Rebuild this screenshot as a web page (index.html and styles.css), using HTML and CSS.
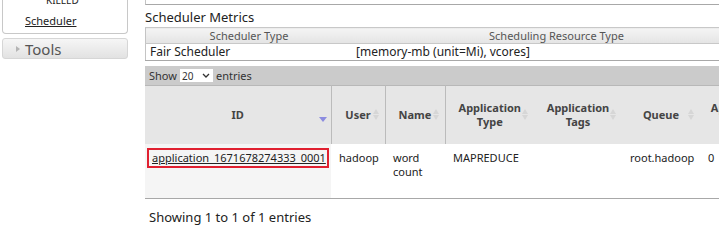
FILE: index.html
```html
<!DOCTYPE html>
<html lang="en">
<head>
    <meta charset="UTF-8">
    <title>All Applications</title>
    <link rel="stylesheet" href="styles.css">
</head>
<body>

    <div class="page">
        <nav class="nav">
            <div class="nav-panel">
                <ul class="nav-list">
                    <li class="state"><a href="#">KILLED</a></li>
                    <li><a href="#">Scheduler</a></li>
                </ul>
            </div>
            <h3 class="nav-head"><span class="nav-arrow"></span>Tools</h3>
        </nav>

        <main class="content">
            <!-- tail of the cluster metrics table, scrolled off the top -->
            <div class="prev-table">
                <span>g</span><span>g</span><span>g</span><span>g</span>
            </div>

            <h3 class="section-title">Scheduler Metrics</h3>
            <table class="metrics">
                <thead>
                    <tr>
                        <th class="col-type">Scheduler Type</th>
                        <th class="col-res">Scheduling Resource Type</th>
                    </tr>
                </thead>
                <tbody>
                    <tr>
                        <td>Fair Scheduler</td>
                        <td>[memory-mb (unit=Mi), vcores]</td>
                    </tr>
                </tbody>
            </table>

            <div class="apps">
                <div class="apps-length">
                    Show
                    <span class="length-select">20
                        <svg width="8" height="5" viewBox="0 0 8 5"><path d="M1 1 L4 4 L7 1" fill="none" stroke="#333" stroke-width="1.3"/></svg>
                    </span>
                    entries
                </div>

                <table class="apps-table">
                    <thead>
                        <tr>
                            <th class="c-id sep">ID<span class="sort sort-desc"></span></th>
                            <th class="c-user sep">User<span class="sort"></span></th>
                            <th class="c-name sep">Name<span class="sort"></span></th>
                            <th class="c-type">Application Type<span class="sort"></span></th>
                            <th class="c-tags">Application Tags<span class="sort"></span></th>
                            <th class="c-queue">Queue<span class="sort"></span></th>
                            <th class="c-prio">Application Priority<span class="sort"></span></th>
                        </tr>
                    </thead>
                    <tbody>
                        <tr>
                            <td class="sorted"><a class="app-link" href="#">application_1671678274333_0001</a></td>
                            <td>hadoop</td>
                            <td>word count</td>
                            <td>MAPREDUCE</td>
                            <td></td>
                            <td>root.hadoop</td>
                            <td>0</td>
                        </tr>
                    </tbody>
                </table>

                <div class="apps-info">Showing 1 to 1 of 1 entries</div>
            </div>
        </main>
    </div>

</body>
</html>
```

FILE: styles.css
```css
/* base */
body {
    margin: 0;
    font-family: 'Noto Sans', 'Open Sans', sans-serif;
    font-size: 13px;
    color: #222;
    background: #fff;
    overflow: hidden;
}

a {
    color: #222;
}

.page {
    display: flex;
    align-items: flex-start;
}

/* --- left navigation (accordion) --- */
.nav {
    width: 126px;
    margin-left: 2px;
    flex-shrink: 0;
}

.nav-panel {
    border: 1px solid #c8c8c8;
    border-top: none;
    border-radius: 0 0 4px 4px;
    margin-top: -6px;
    padding-bottom: 2px;
}

.nav-list {
    list-style: none;
    margin: 0;
    padding: 0;
}

.nav-list li {
    margin-top: 5px;
    padding-left: 22px;
    font-size: 11px;
    line-height: 20px;
}

.nav-list .state {
    margin-top: 0;
    padding-left: 43px;
    font-size: 10px;
    line-height: 12px;
}

.nav-list .state a {
    text-decoration: none;
}

.nav-head {
    display: flex;
    align-items: center;
    margin: 4px 0 0;
    height: 19px;
    border: 1px solid #d6d6d6;
    border-radius: 3px;
    background: linear-gradient(#f6f6f6, #e2e2e2);
    font-size: 15px;
    font-weight: normal;
    color: #555;
}

.nav-arrow {
    width: 0;
    height: 0;
    margin: 0 5px 0 13px;
    border-top: 3px solid transparent;
    border-bottom: 3px solid transparent;
    border-left: 4px solid #b4b4b4;
}

/* --- main content --- */
.content {
    flex: 1;
    min-width: 0;
    margin-left: 17px;
}

.prev-table {
    height: 4px;
    overflow: hidden;
    border-left: 1px solid #c4c4c4;
    border-bottom: 1px solid #a8a8a8;
    display: flex;
    align-items: flex-end;
    font-size: 12px;
    line-height: 1;
}

.prev-table span {
    margin-left: 1px;
    margin-bottom: -9px;
}

.prev-table span:nth-child(2) { margin-left: 143px; }
.prev-table span:nth-child(3) { margin-left: 272px; }
.prev-table span:nth-child(4) { margin-left: 140px; }

.section-title {
    margin: 3px 0 0;
    font-size: 13px;
    font-weight: normal;
    line-height: 18px;
}

/* scheduler metrics table */
.metrics {
    width: 616px;
    margin-top: 1px;
    border-collapse: collapse;
    border-left: 1px solid #c4c4c4;
    border-bottom: 1px solid #a8a8a8;
    font-size: 12px;
}

.metrics th {
    height: 15px;
    padding: 0 5px;
    font-size: 11px;
    font-weight: normal;
    line-height: 15px;
    color: #555;
    background: linear-gradient(#f4f4f4, #e4e4e4);
    border-top: 1px solid #c8c8c8;
    border-bottom: 1px solid #c8c8c8;
}

.metrics td {
    height: 16px;
    padding: 0 4px;
    line-height: 16px;
}

.metrics .col-type {
    width: 196px;
}

/* applications table */
.apps {
    margin-top: 5px;
}

.apps-length {
    display: flex;
    align-items: center;
    gap: 3px;
    height: 19px;
    padding-left: 4px;
    background: #cbcbcb;
    color: #333;
    font-size: 11px;
}

.length-select {
    display: flex;
    align-items: center;
    justify-content: space-between;
    width: 28px;
    height: 13px;
    padding: 0 3px 0 2px;
    background: #fff;
    font-size: 10px;
}

.apps-table {
    width: 639px;
    border-collapse: collapse;
    table-layout: fixed;
    border-bottom: 1px solid #a8a8a8;
    font-size: 11px;
}

.apps-table th {
    box-sizing: border-box;
    position: relative;
    height: 58px;
    padding: 0 10px;
    background: #e6e6e6;
    border-top: 1px solid #b8b8b8;
    color: #444;
    line-height: 14px;
}

.apps-table th.sep {
    border-right: 1px solid #bbb;
}

.apps-table .c-id { width: 186px; }
.apps-table .c-user { width: 54px; }
.apps-table .c-name { width: 60px; }
.apps-table .c-type { width: 89px; }
.apps-table .c-tags { width: 88px; }
.apps-table .c-queue { width: 78px; }
.apps-table .c-prio { width: 84px; }

.apps-table td {
    height: 40px;
    padding: 7px 8px;
    vertical-align: top;
    line-height: 14px;
}

.apps-table td.sorted {
    background: #f5f5f5;
    padding: 4px 2px;
}

/* sort icons: grey diamond, blue triangle on the sorted column */
.sort {
    position: absolute;
    right: 5px;
    top: 50%;
    width: 7px;
    height: 11px;
    margin-top: -6px;
}

.sort::before,
.sort::after {
    content: '';
    position: absolute;
    left: 0;
    border-left: 3.5px solid transparent;
    border-right: 3.5px solid transparent;
}

.sort::before {
    top: 0;
    border-bottom: 5px solid #d6d6d6;
}

.sort::after {
    bottom: 0;
    border-top: 5px solid #d6d6d6;
}

.sort-desc::before {
    display: none;
}

.sort-desc::after {
    bottom: -2px;
    border-left-width: 4px;
    border-right-width: 4px;
    border-top: 5px solid #8c8ce0;
}

.app-link {
    display: block;
    padding: 1px 3px;
    border: 2px solid #e02030;
    line-height: 14px;
}

.apps-info {
    padding: 10px 0 0 4px;
    line-height: 16px;
}
```
